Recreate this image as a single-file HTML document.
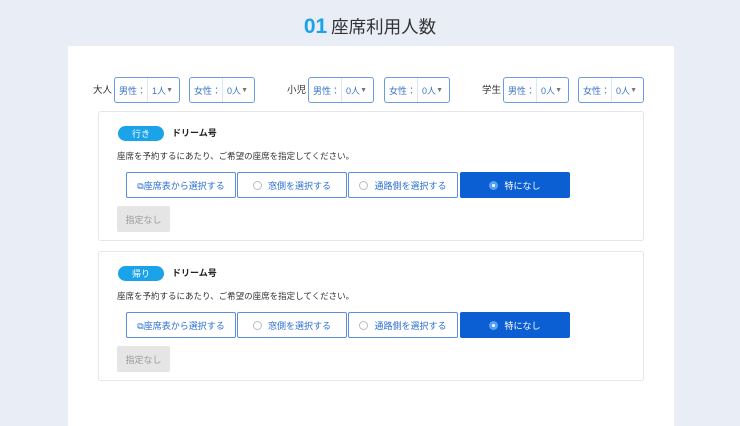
<!DOCTYPE html><html><head><meta charset="utf-8"><style>
*{box-sizing:border-box;margin:0;padding:0}
body{width:740px;height:420px;background:#e9edf5;font-family:"Liberation Sans","Noto Sans CJK JP",sans-serif;position:relative;overflow:hidden;color:#333}
.abs{position:absolute;white-space:nowrap}
.title{left:0;width:740px;top:13px;text-align:center;font-size:17.5px;color:#333;line-height:28px}
.title b{color:#1aa3e8;font-size:21px;margin-right:4px}
.panel{left:68px;top:46px;width:606px;height:380px;background:#fff}
.lbl{font-size:9.5px;color:#333;line-height:12px}
.sel{height:26px;width:66px;border:1.5px solid #6b9be3;border-radius:3px;top:77px;font-size:9px;color:#3b74c9;display:flex;align-items:center}
.sel span.a{padding-left:4px;width:34px;border-right:1px solid #dbe5f5;height:100%;display:flex;align-items:center}
.sel span.b{padding-left:4px;flex:1}
.sel i{font-style:normal;font-size:7px;color:#777;margin-right:6px}
.card{left:98px;width:546px;height:130px;border:1px solid #e3e6ea;border-radius:3px;background:#fff}
.badge{left:19px;top:14px;width:46px;height:15px;border-radius:8px;background:#1aa3e8;color:#fff;font-size:9px;display:flex;align-items:center;justify-content:center}
.name{left:73px;top:15px;font-size:9px;font-weight:bold;color:#222;line-height:13px}
.desc{left:18px;top:38px;font-size:8.5px;color:#333;line-height:13px}
.btn{top:60px;height:26px;width:110px;border:1.5px solid #5b8fdc;font-size:9px;color:#2c6fd0;display:flex;align-items:center;justify-content:center;border-radius:2px}
.btn .r{width:9px;height:9px;border:1px solid #bbb;border-radius:50%;margin-right:6px}
.btn.on{background:#0b5fd2;border-color:#0b5fd2;color:#fff}
.btn.on .r{border:none;background:#5aa0f5;position:relative}
.btn.on .r:after{content:"";position:absolute;left:3px;top:3px;width:3px;height:3px;background:#fff;border-radius:50%}
.gray{left:18px;top:94px;width:53px;height:26px;background:#e5e5e5;color:#999;font-size:9px;display:flex;align-items:center;justify-content:center;border-radius:2px}
</style></head><body>
<div class="abs title"><b>01</b>座席利用人数</div>
<div class="abs panel"></div>
<div class="abs lbl" style="left:93px;top:85px">大人</div>
<div class="abs sel" style="left:114px"><span class="a">男性：</span><span class="b">1人</span><i>▼</i></div>
<div class="abs sel" style="left:189px"><span class="a">女性：</span><span class="b">0人</span><i>▼</i></div>
<div class="abs lbl" style="left:287px;top:85px">小児</div>
<div class="abs sel" style="left:308px"><span class="a">男性：</span><span class="b">0人</span><i>▼</i></div>
<div class="abs sel" style="left:384px"><span class="a">女性：</span><span class="b">0人</span><i>▼</i></div>
<div class="abs lbl" style="left:482px;top:85px">学生</div>
<div class="abs sel" style="left:503px"><span class="a">男性：</span><span class="b">0人</span><i>▼</i></div>
<div class="abs sel" style="left:578px"><span class="a">女性：</span><span class="b">0人</span><i>▼</i></div>

<div class="abs card" style="top:111px">
<div class="abs badge">行き</div><div class="abs name">ドリーム号</div>
<div class="abs desc">座席を予約するにあたり、ご希望の座席を指定してください。</div>
<div class="abs btn" style="left:27px">⧉座席表から選択する</div>
<div class="abs btn" style="left:138px"><span class="r"></span>窓側を選択する</div>
<div class="abs btn" style="left:249px"><span class="r"></span>通路側を選択する</div>
<div class="abs btn on" style="left:361px"><span class="r"></span>特になし</div>
<div class="abs gray">指定なし</div>
</div>
<div class="abs card" style="top:251px">
<div class="abs badge">帰り</div><div class="abs name">ドリーム号</div>
<div class="abs desc">座席を予約するにあたり、ご希望の座席を指定してください。</div>
<div class="abs btn" style="left:27px">⧉座席表から選択する</div>
<div class="abs btn" style="left:138px"><span class="r"></span>窓側を選択する</div>
<div class="abs btn" style="left:249px"><span class="r"></span>通路側を選択する</div>
<div class="abs btn on" style="left:361px"><span class="r"></span>特になし</div>
<div class="abs gray">指定なし</div>
</div>
</body></html>
